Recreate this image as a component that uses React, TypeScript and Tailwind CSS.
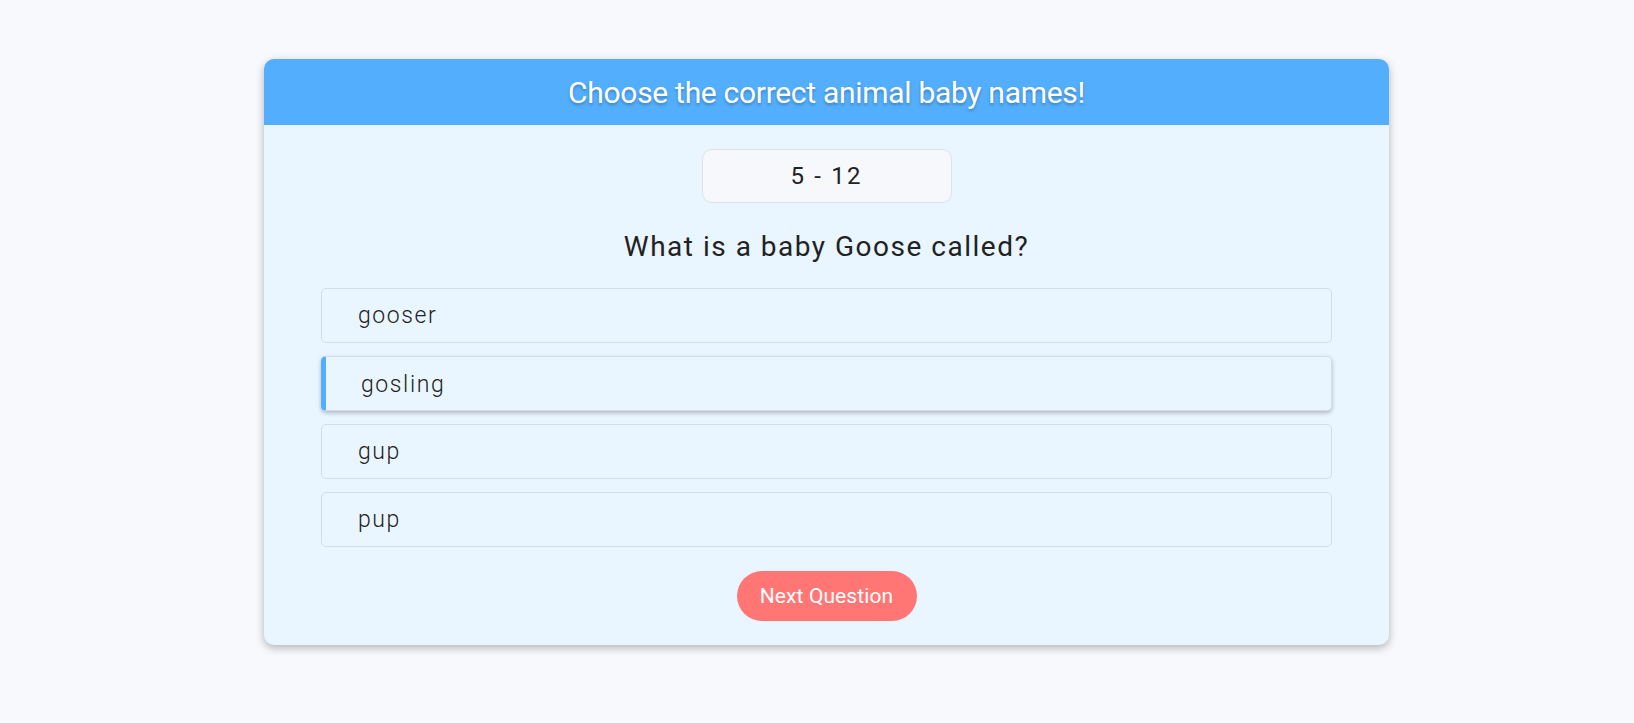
import React from "react";

const options = ["gooser", "gosling", "gup", "pup"];

export default function App() {
  const selected = 1;
  return (
    <div className="min-h-[723px] w-full bg-[#f7f9fc] pt-[59px] pl-[19px] flex justify-center items-start" style={{ fontFamily: "Roboto, 'Liberation Sans', sans-serif" }}>
      <div className="w-[1125px] rounded-[10px] overflow-hidden bg-[#e9f5ff] shadow-[0_3px_8px_rgba(0,0,0,0.28)]">
        <div className="h-[66px] bg-[#53aefe] flex items-center justify-center">
          <h1 className="text-[30px] leading-[35px] text-white tracking-[-0.3px] [text-shadow:0_2px_3px_rgba(0,0,0,0.25)]">
            Choose the correct animal baby names!
          </h1>
        </div>
        <div className="flex flex-col items-center px-[57px] pt-[24px] pb-[24px]">
          <div className="w-[250px] h-[54px] rounded-[10px] border border-[#dde3ea] bg-[#f6f8fb] flex items-center justify-center text-[24px] leading-[28px] tracking-[2.2px] text-[#222]">
            5 - 12
          </div>
          <div className="mt-[27px] text-[28px] leading-[33px] tracking-[1.5px] text-[#222]">
            What is a baby Goose called?
          </div>
          <div className="mt-[25px] w-full flex flex-col gap-[13px]">
            {options.map((o, i) => (
              <div
                key={o}
                className={
                  i === selected
                    ? "h-[55px] rounded-[5px] border border-[#d3dde7] border-l-[5px] border-l-[#53aefe] bg-[#eaf6ff] flex items-center pl-[35px] pt-[3px] text-[23px] font-light tracking-[1.6px] text-[#222] shadow-[0_2px_4px_rgba(0,0,0,0.25)]"
                    : "h-[55px] rounded-[5px] border border-[#d3dde7] bg-[#eaf6ff] flex items-center pl-[36px] pt-[2px] text-[23px] font-light tracking-[1.6px] text-[#222]"
                }
              >
                {o}
              </div>
            ))}
          </div>
          <button className="mt-[24px] w-[180px] h-[50px] rounded-full bg-[#ff7675] text-white text-[21px] leading-[25px] tracking-[0.1px]">
            Next Question
          </button>
        </div>
      </div>
    </div>
  );
}
